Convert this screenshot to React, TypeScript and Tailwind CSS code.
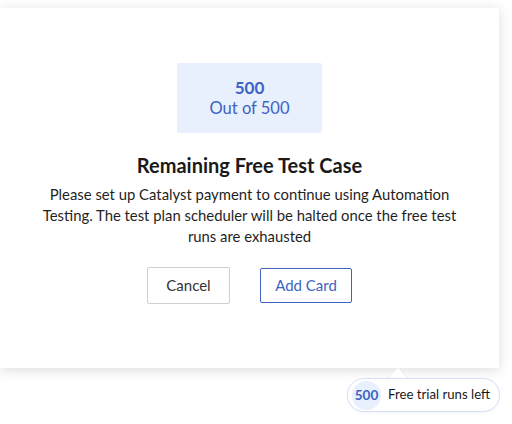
import React from "react";

export default function App() {
  return (
    <div className="relative w-[512px] h-[424px] bg-white overflow-hidden" style={{ fontFamily: "Lato, 'Noto Sans', sans-serif" }}>
      <div className="pt-[8px]">
        <div className="w-[499px] h-[360px] bg-white shadow-[0_2px_12px_rgba(0,0,0,0.14)] flex flex-col items-center pt-[55px]">
          <div className="w-[145px] h-[70px] bg-[#e8effd] rounded-[2px] flex flex-col items-center justify-center text-[#3d63c4] leading-[21px]">
            <div className="text-[17px] font-bold">500</div>
            <div className="text-[16.5px]">Out of 500</div>
          </div>
          <div className="mt-[20px] text-[20px] font-bold text-[#1a1a1a] leading-[24px]">Remaining Free Test Case</div>
          <div className="mt-[7px] w-[420px] text-center text-[14.85px] leading-[21px] text-[#1f1f1f]">
            Please set up Catalyst payment to continue using Automation Testing. The test plan scheduler will be halted once the free test runs are exhausted
          </div>
          <div className="mt-[20px] flex items-center gap-[30px]">
            <button className="w-[83px] h-[37px] border border-[#cfcfcf] rounded-[2px] text-[15px] text-[#333] bg-white">Cancel</button>
            <button className="w-[92px] h-[35px] border border-[#3d63c4] rounded-[2px] text-[15px] text-[#3d63c4] bg-white">Add Card</button>
          </div>
        </div>
      </div>
      <div className="absolute left-[388px] top-[367px] w-0 h-0 border-l-[10px] border-r-[10px] border-b-[11px] border-l-transparent border-r-transparent border-b-[#ececec]" />
      <div className="absolute left-[389px] top-[368px] w-0 h-0 border-l-[9px] border-r-[9px] border-b-[10px] border-l-transparent border-r-transparent border-b-white" />
      <div className="absolute left-[347px] top-[378px] w-[153px] h-[34px] rounded-full border border-[#d6e0f7] bg-white flex items-center pl-[4px] gap-[7px] shadow-[0_1px_3px_rgba(0,0,0,0.05)]">
        <div className="w-[29px] h-[29px] rounded-full bg-[#e8effd] flex items-center justify-center text-[13.5px] font-bold text-[#3d63c4]">500</div>
        <div className="text-[13.2px] text-[#1a1a1a] whitespace-nowrap">Free trial runs left</div>
      </div>
    </div>
  );
}
